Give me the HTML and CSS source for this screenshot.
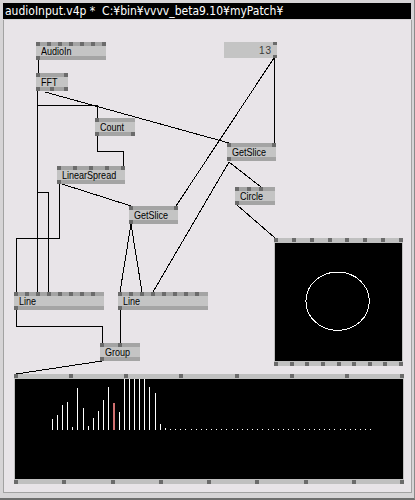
FILE: index.html
```html
<!DOCTYPE html>
<html>
<head>
<meta charset="utf-8">
<link rel="stylesheet" href="styles.css">
</head>
<body>
<div class="window">
  <div class="titlebar">audioInput.v4p *&nbsp;&nbsp;C:¥bin¥vvvv_beta9.10¥myPatch¥</div>
  <div class="canvas"></div>

  <svg class="wires" width="415" height="500" viewBox="0 0 415 500" shape-rendering="crispEdges">
    <g stroke="#000" stroke-width="1" fill="none">
      <path d="M38.5 60 V73"/>
      <path d="M37.5 91 V292"/>
      <path d="M37.5 105.5 H97.5 V118"/>
      <path d="M37.5 192.5 H48.5 V292"/>
      <path d="M45 92 L229 143"/>
      <path d="M97.5 136 V151.5 H123.5 V166"/>
      <path d="M59.5 184 V238.5 H16.5 V292"/>
      <path d="M62 184 L131 206"/>
      <path d="M131 224 L120 292"/>
      <path d="M131 224 L142 292"/>
      <path d="M229 162 L153 292"/>
      <path d="M229 162 L261 187"/>
      <path d="M274.5 58 V143"/>
      <path d="M274 58 L176 206"/>
      <path d="M237 205 L275 238"/>
      <path d="M16.5 310 V326.5 H102.5 V343"/>
      <path d="M120.5 310 V343"/>
      <path d="M102 361 L16 374"/>
    </g>
  </svg>

  <div class="node n-audioin">
    <div class="strip"><i class="pin"></i><i class="pin"></i><i class="pin"></i><i class="pin"></i><i class="pin"></i><i class="pin"></i><i class="pin"></i></div>
    <div class="label"><span class="txt">AudioIn</span></div>
    <div class="strip"><i class="pin"></i></div>
  </div>

  <div class="node n-fft">
    <div class="strip"><i class="pin"></i><i class="pin"></i></div>
    <div class="label"><span class="txt">FFT</span></div>
    <div class="strip"><i class="pin"></i><i class="pin"></i><i class="pin"></i></div>
  </div>

  <div class="node n-count">
    <div class="strip"><i class="pin"></i></div>
    <div class="label"><span class="txt">Count</span></div>
    <div class="strip"><i class="pin"></i><i class="pin"></i></div>
  </div>

  <div class="node n-linear">
    <div class="strip"><i class="pin"></i><i class="pin"></i><i class="pin"></i><i class="pin"></i><i class="pin"></i></div>
    <div class="label"><span class="txt">LinearSpread</span></div>
    <div class="strip"><i class="pin"></i></div>
  </div>

  <div class="node n-getslice-a">
    <div class="strip"><i class="pin"></i><i class="pin"></i></div>
    <div class="label"><span class="txt">GetSlice</span></div>
    <div class="strip"><i class="pin"></i></div>
  </div>

  <div class="iobox">
    <i class="io-pin io-top"></i>
    <span class="io-value">13</span>
    <i class="io-pin io-bottom"></i>
  </div>

  <div class="node n-getslice-b">
    <div class="strip"><i class="pin"></i><i class="pin"></i></div>
    <div class="label"><span class="txt">GetSlice</span></div>
    <div class="strip"><i class="pin"></i></div>
  </div>

  <div class="node n-circle">
    <div class="strip gap8"><i class="pin"></i><i class="pin"></i><i class="pin"></i></div>
    <div class="label"><span class="txt">Circle</span></div>
    <div class="strip"><i class="pin"></i></div>
  </div>

  <div class="node n-line1">
    <div class="strip gap7"><i class="pin"></i><i class="pin"></i><i class="pin"></i><i class="pin"></i><i class="pin"></i><i class="pin"></i><i class="pin"></i><i class="pin"></i></div>
    <div class="label"><span class="txt">Line</span></div>
    <div class="strip"><i class="pin"></i></div>
  </div>

  <div class="node n-line2">
    <div class="strip gap7"><i class="pin"></i><i class="pin"></i><i class="pin"></i><i class="pin"></i><i class="pin"></i><i class="pin"></i><i class="pin"></i><i class="pin"></i></div>
    <div class="label"><span class="txt">Line</span></div>
    <div class="strip"><i class="pin"></i></div>
  </div>

  <div class="node n-group">
    <div class="strip gap14"><i class="pin"></i><i class="pin"></i></div>
    <div class="label"><span class="txt">Group</span></div>
    <div class="strip"><i class="pin"></i></div>
  </div>

  <div class="renderer r-circle">
    <div class="rstrip"><i class="pin"></i><i class="pin"></i><i class="pin"></i><i class="pin"></i><i class="pin"></i><i class="pin"></i><i class="pin"></i><i class="pin"></i></div>
    <div class="screen">
      <svg width="127" height="118" viewBox="0 0 127 118" shape-rendering="crispEdges">
        <ellipse cx="62.6" cy="58.2" rx="31.7" ry="29.2" fill="none" stroke="#fff" stroke-width="1"/>
      </svg>
    </div>
    <div class="rstrip"><i class="pin"></i><i class="pin"></i><i class="pin"></i><i class="pin"></i><i class="pin"></i><i class="pin"></i><i class="pin"></i><i class="pin"></i><i class="pin"></i></div>
  </div>

  <div class="renderer r-spectrum">
    <div class="rstrip"><i class="pin"></i><i class="pin"></i><i class="pin"></i><i class="pin"></i><i class="pin"></i><i class="pin"></i><i class="pin"></i><i class="pin"></i></div>
    <div class="screen">
      <svg width="388" height="100" viewBox="15 379 388 100" shape-rendering="crispEdges">
        <g fill="#fff">
          <rect x="52" y="419" width="1" height="11"/>
          <rect x="57" y="415" width="1" height="15"/>
          <rect x="62" y="405" width="1" height="25"/>
          <rect x="67" y="402" width="1" height="28"/>
          <rect x="72" y="427" width="1" height="3"/>
          <rect x="77" y="388" width="1" height="42"/>
          <rect x="83" y="408" width="1" height="22"/>
          <rect x="88" y="426" width="1" height="4"/>
          <rect x="93" y="418" width="1" height="12"/>
          <rect x="98" y="411" width="1" height="19"/>
          <rect x="103" y="400" width="1" height="30"/>
          <rect x="108" y="387" width="1" height="43"/>
          <rect x="119" y="412" width="1" height="18"/>
          <rect x="124" y="379" width="1" height="51"/>
          <rect x="129" y="379" width="1" height="51"/>
          <rect x="134" y="379" width="1" height="51"/>
          <rect x="139" y="379" width="1" height="51"/>
          <rect x="144" y="379" width="1" height="51"/>
          <rect x="149" y="387" width="1" height="43"/>
          <rect x="155" y="393" width="1" height="37"/>
          <rect x="160" y="424" width="1" height="6"/>
          <rect x="165" y="428" width="1" height="2"/>
          <rect x="170" y="429" width="1" height="1"/>
          <rect x="175" y="429" width="1" height="1"/>
          <rect x="180" y="429" width="1" height="1"/>
          <rect x="185" y="429" width="1" height="1"/>
          <rect x="191" y="429" width="1" height="1"/>
          <rect x="196" y="429" width="1" height="1"/>
          <rect x="201" y="429" width="1" height="1"/>
          <rect x="206" y="429" width="1" height="1"/>
          <rect x="211" y="429" width="1" height="1"/>
          <rect x="216" y="429" width="1" height="1"/>
          <rect x="221" y="429" width="1" height="1"/>
          <rect x="226" y="429" width="1" height="1"/>
          <rect x="232" y="429" width="1" height="1"/>
          <rect x="237" y="429" width="1" height="1"/>
          <rect x="242" y="429" width="1" height="1"/>
          <rect x="247" y="429" width="1" height="1"/>
          <rect x="252" y="429" width="1" height="1"/>
          <rect x="257" y="429" width="1" height="1"/>
          <rect x="262" y="429" width="1" height="1"/>
          <rect x="268" y="429" width="1" height="1"/>
          <rect x="273" y="429" width="1" height="1"/>
          <rect x="278" y="429" width="1" height="1"/>
          <rect x="283" y="429" width="1" height="1"/>
          <rect x="288" y="429" width="1" height="1"/>
          <rect x="293" y="429" width="1" height="1"/>
          <rect x="298" y="429" width="1" height="1"/>
          <rect x="304" y="429" width="1" height="1"/>
          <rect x="309" y="429" width="1" height="1"/>
          <rect x="314" y="429" width="1" height="1"/>
          <rect x="319" y="429" width="1" height="1"/>
          <rect x="324" y="429" width="1" height="1"/>
          <rect x="329" y="429" width="1" height="1"/>
          <rect x="334" y="429" width="1" height="1"/>
          <rect x="340" y="429" width="1" height="1"/>
          <rect x="345" y="429" width="1" height="1"/>
          <rect x="350" y="429" width="1" height="1"/>
          <rect x="355" y="429" width="1" height="1"/>
          <rect x="360" y="429" width="1" height="1"/>
          <rect x="365" y="429" width="1" height="1"/>
          <rect x="370" y="429" width="1" height="1"/>
        </g>
        <rect x="113" y="403" width="2" height="27" fill="#d07070"/>
      </svg>
    </div>
    <div class="rstrip"><i class="pin"></i><i class="pin"></i><i class="pin"></i><i class="pin"></i><i class="pin"></i><i class="pin"></i><i class="pin"></i><i class="pin"></i><i class="pin"></i></div>
  </div>
</div>
</body>
</html>
```

FILE: styles.css
```css
html, body {
  margin: 0;
  padding: 0;
  background: #d4d4d4;
}

.window {
  position: relative;
  width: 415px;
  height: 500px;
  box-sizing: border-box;
  background: #d6d4d6;
  padding: 3px 3px 0 3px;
  border-right: 1px solid #8a8a8a;
  border-bottom: 2px solid #6e6e6e;
  overflow: hidden;
}

.titlebar {
  height: 16px;
  width: 408px;
  background: #000;
  color: #fff;
  font-family: "DejaVu Sans Condensed", "Liberation Sans", sans-serif;
  font-size: 12px;
  line-height: 16px;
  padding-left: 2px;
  box-sizing: border-box;
  white-space: nowrap;
}

.canvas {
  margin-top: 1px;
  width: 407px;
  height: 472px;
  background: #e8e4e8;
  border-left: 1px solid #a2a2a2;
  border-right: 1px solid #a2a2a2;
  border-bottom: 1px solid #a2a2a2;
}

.wires {
  position: absolute;
  left: 0;
  top: 0;
}

.node {
  position: absolute;
  display: flex;
  flex-direction: column;
}

.strip {
  height: 4px;
  background: #a4a4a4;
  display: flex;
  justify-content: space-between;
}

.strip.gap7 { justify-content: flex-start; gap: 7px; }
.strip.gap8 { justify-content: flex-start; gap: 8px; }
.strip.gap14 { justify-content: flex-start; gap: 14px; }

.pin {
  display: block;
  width: 4px;
  height: 4px;
  background: #6b6b6b;
}

.label {
  height: 10px;
  background: #c4c4c4;
  color: #000;
  font-family: "Liberation Sans", Arial, sans-serif;
  font-size: 11px;
  line-height: 10px;
  padding-left: 5px;
  white-space: nowrap;
  overflow: visible;
}

.txt {
  display: inline-block;
  transform: scaleX(0.82);
  transform-origin: 0 50%;
}

.n-audioin { left: 36px; top: 42px; width: 70px; }
.n-fft { left: 36px; top: 73px; width: 32px; }
.n-count { left: 95px; top: 118px; width: 40px; }
.n-linear { left: 57px; top: 166px; width: 68px; }
.n-getslice-a { left: 129px; top: 206px; width: 49px; }
.n-getslice-b { left: 227px; top: 143px; width: 49px; }
.n-circle { left: 235px; top: 187px; width: 40px; }
.n-line1 { left: 14px; top: 292px; width: 90px; }
.n-line2 { left: 118px; top: 292px; width: 90px; }
.n-group { left: 100px; top: 343px; width: 40px; }

.iobox {
  position: absolute;
  left: 224px;
  top: 42px;
  width: 53px;
  height: 16px;
  background: #c4c4c4;
  display: flex;
  align-items: center;
  justify-content: flex-end;
}

.io-value {
  font-family: "Liberation Sans", Arial, sans-serif;
  font-size: 10px;
  color: #3a3a3a;
  padding-right: 5px;
  letter-spacing: 1px;
}

.io-pin {
  position: absolute;
  right: 0;
  width: 4px;
  height: 3px;
  background: #6b6b6b;
}

.io-top { top: 0; }
.io-bottom { bottom: 0; }

.renderer {
  position: absolute;
  display: flex;
  flex-direction: column;
}

.rstrip {
  height: 5px;
  background: #c0c0c0;
  display: flex;
  justify-content: space-between;
}

.rstrip .pin { height: 4px; }
.rstrip:first-child { align-items: flex-start; }
.rstrip:last-child { align-items: flex-end; }

.screen {
  background: #000;
  border-left: 1px solid #c0c0c0;
  border-right: 1px solid #c0c0c0;
  display: flex;
}

.screen svg { display: block; }

.r-circle { left: 274px; top: 238px; width: 129px; }
.r-circle .screen { height: 118px; }

.r-spectrum { left: 14px; top: 374px; width: 390px; }
.r-spectrum .screen { height: 100px; }
```
